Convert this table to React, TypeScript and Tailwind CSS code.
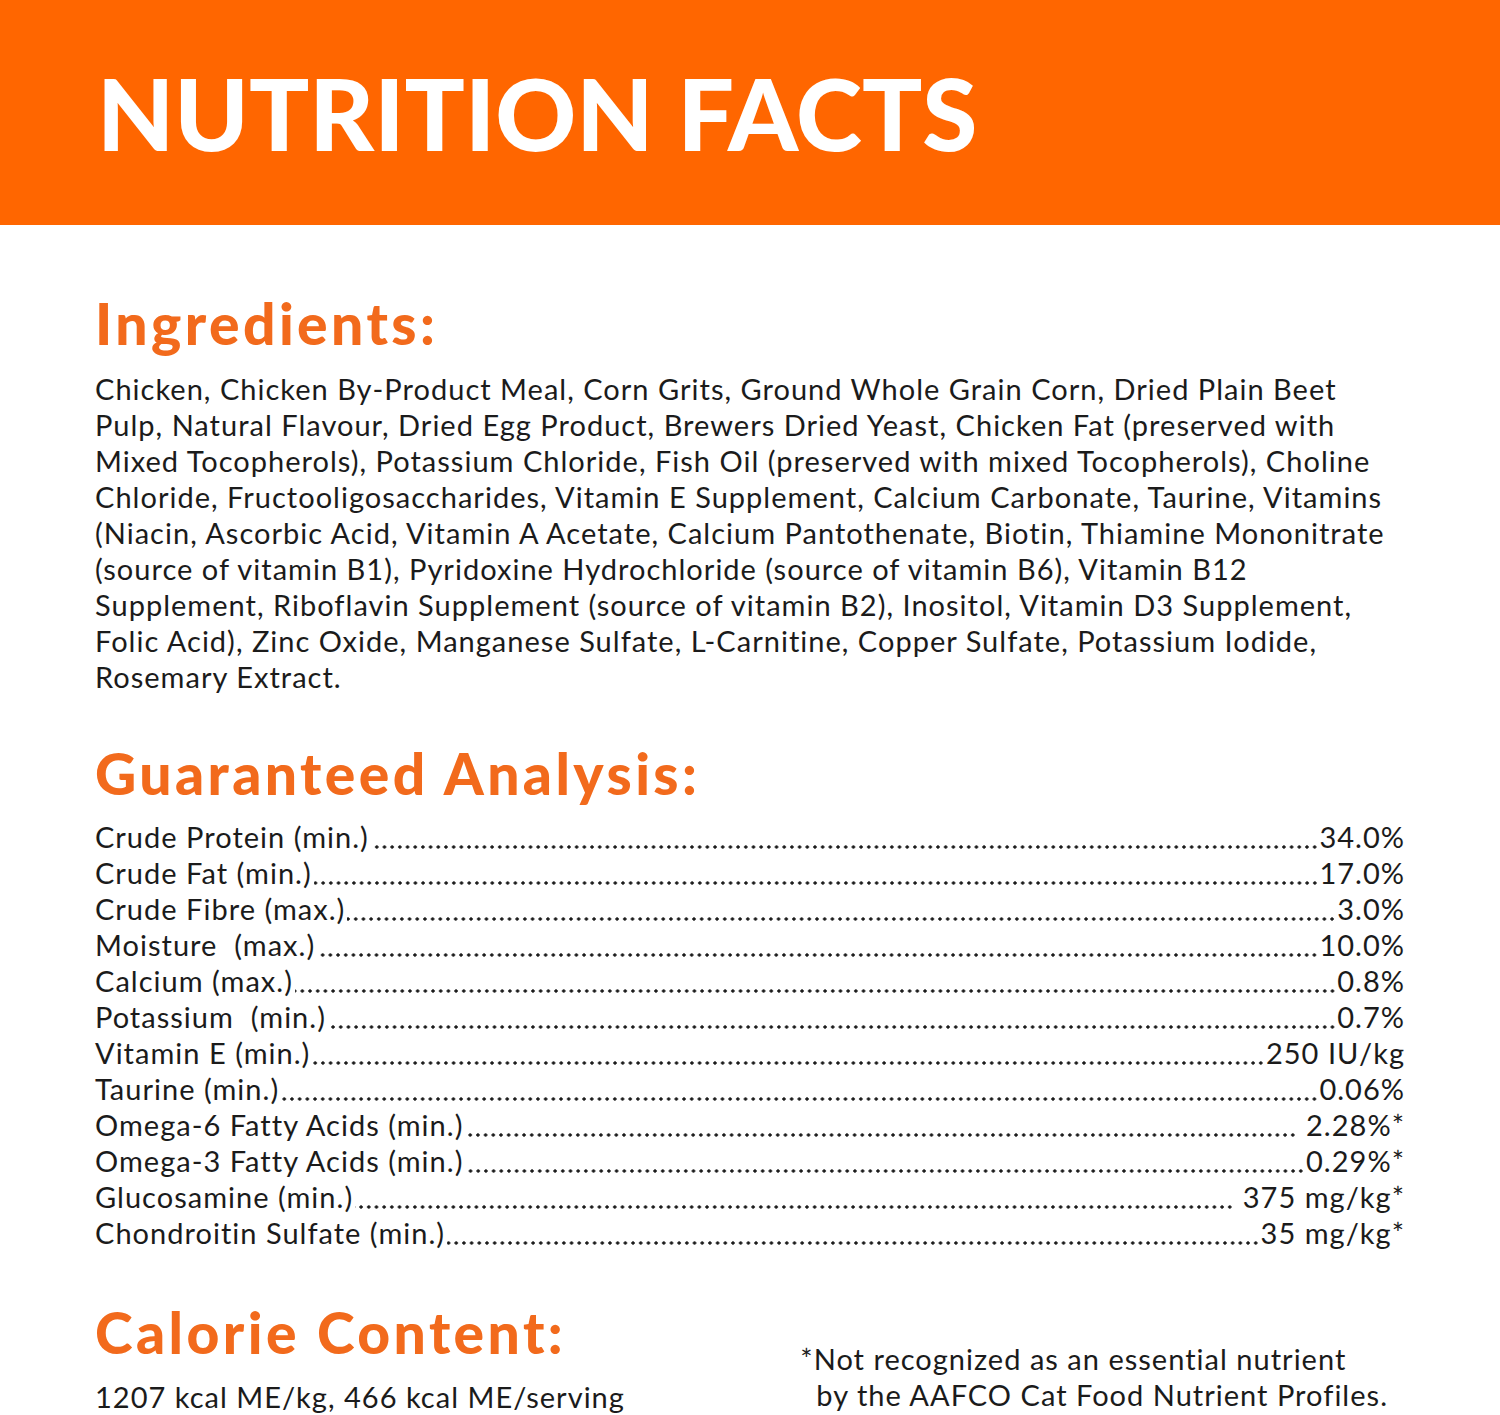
const ingredientLines = [
  "Chicken, Chicken By-Product Meal, Corn Grits, Ground Whole Grain Corn, Dried Plain Beet",
  "Pulp, Natural Flavour, Dried Egg Product, Brewers Dried Yeast, Chicken Fat (preserved with",
  "Mixed Tocopherols), Potassium Chloride, Fish Oil (preserved with mixed Tocopherols), Choline",
  "Chloride, Fructooligosaccharides, Vitamin E Supplement, Calcium Carbonate, Taurine, Vitamins",
  "(Niacin, Ascorbic Acid, Vitamin A Acetate, Calcium Pantothenate, Biotin, Thiamine Mononitrate",
  "(source of vitamin B1), Pyridoxine Hydrochloride (source of vitamin B6), Vitamin B12",
  "Supplement, Riboflavin Supplement (source of vitamin B2), Inositol, Vitamin D3 Supplement,",
  "Folic Acid), Zinc Oxide, Manganese Sulfate, L-Carnitine, Copper Sulfate, Potassium Iodide,",
  "Rosemary Extract.",
];

const analysis = [
  { label: "Crude Protein (min.)", value: "34.0%", gap: false },
  { label: "Crude Fat (min.)", value: "17.0%", gap: false },
  { label: "Crude Fibre (max.)", value: "3.0%", gap: false },
  { label: "Moisture  (max.)", value: "10.0%", gap: false },
  { label: "Calcium (max.)", value: "0.8%", gap: false },
  { label: "Potassium  (min.)", value: "0.7%", gap: false },
  { label: "Vitamin E (min.)", value: "250 IU/kg", gap: false },
  { label: "Taurine (min.)", value: "0.06%", gap: false },
  { label: "Omega-6 Fatty Acids (min.)", value: "2.28%*", gap: true },
  { label: "Omega-3 Fatty Acids (min.)", value: "0.29%*", gap: false },
  { label: "Glucosamine (min.)", value: "375 mg/kg*", gap: true },
  { label: "Chondroitin Sulfate (min.)", value: "35 mg/kg*", gap: false },
];

function Heading({ children }: { children: React.ReactNode }) {
  return (
    <h2 className="text-[57px] font-black leading-none tracking-[0.06em] text-[#f26a1c]">
      {children}
    </h2>
  );
}

export default function App() {
  return (
    <div
      className="h-[1415px] w-[1500px] overflow-hidden bg-white text-[#1b1b1b]"
      style={{ fontFamily: "Lato, 'Open Sans', sans-serif" }}
    >
      <header className="flex h-[225px] items-start bg-[#ff6600] px-[97px] pt-[62px]">
        <h1 className="text-[100px] font-black leading-none tracking-normal text-white">
          NUTRITION FACTS
        </h1>
      </header>

      <main className="px-[95px]">
        <section className="pt-[70px]">
          <Heading>Ingredients:</Heading>
          <div className="mt-[19px] text-[29px] leading-[36px] tracking-[0.035em]">
            {ingredientLines.map((line) => (
              <p key={line} className="whitespace-nowrap">
                {line}
              </p>
            ))}
          </div>
        </section>

        <section className="pt-[50px]">
          <Heading>Guaranteed Analysis:</Heading>
          <ul className="mt-[17px] w-[1310px] text-[29px] leading-[36px] tracking-[0.035em]">
            {analysis.map((row) => (
              <li key={row.label} className="flex items-baseline whitespace-pre">
                <span>{row.label}</span>
                {/* dot leader */}
                <span className="ml-[2px] flex-1 self-stretch bg-[radial-gradient(circle,#1b1b1b_1.4px,transparent_1.9px)] bg-[length:7.7px_4px] bg-[position:right_0_top_26px] bg-repeat-x" />
                <span className={row.gap ? "pl-[9px]" : "pl-[1px]"}>{row.value}</span>
              </li>
            ))}
          </ul>
        </section>

        <section className="flex items-end justify-between pt-[53px]">
          <div>
            <Heading>Calorie Content:</Heading>
            <p className="mt-[18px] text-[29px] leading-[36px] tracking-[0.035em]">
              1207 kcal ME/kg, 466 kcal ME/serving
            </p>
          </div>
          <div className="mb-[2px] mr-[17px] text-[29px] leading-[36px] tracking-[0.035em]">
            <p>*Not recognized as an essential nutrient</p>
            <p className="pl-[16px]">by the AAFCO Cat Food Nutrient Profiles.</p>
          </div>
        </section>
      </main>
    </div>
  );
}
